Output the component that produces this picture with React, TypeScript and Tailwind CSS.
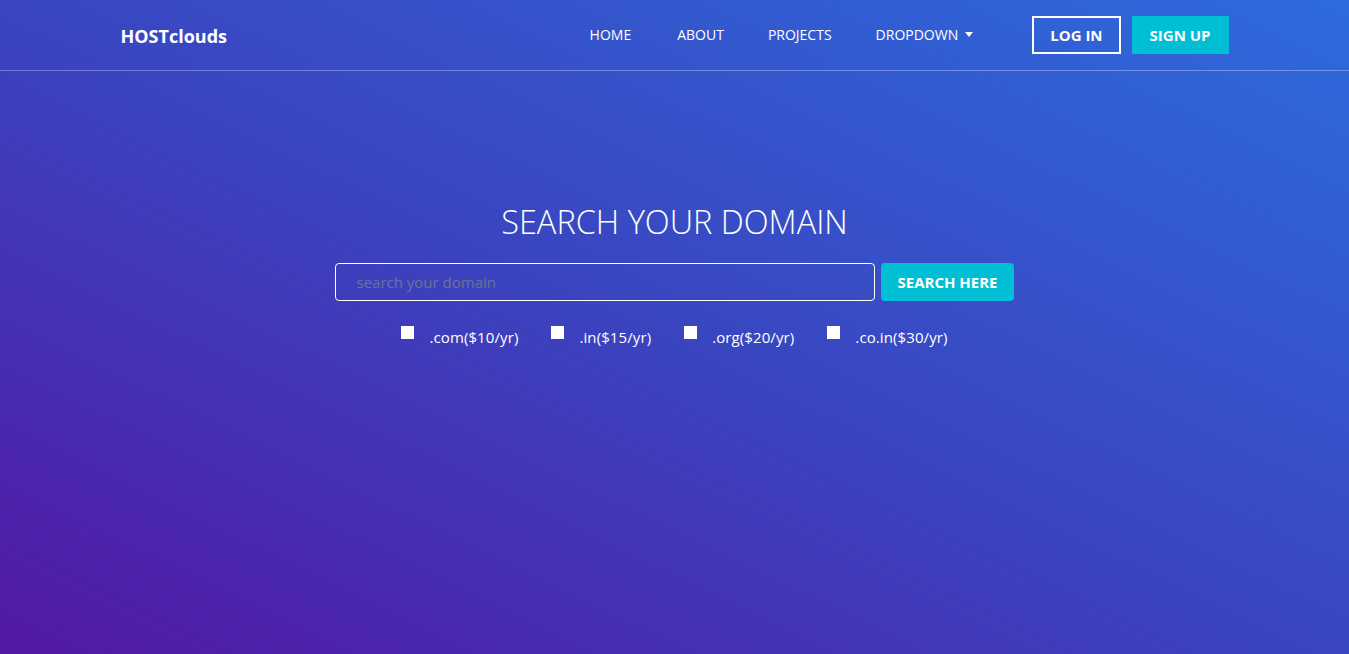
export default function App() {
  const domains = [
    ".com($10/yr)",
    ".in($15/yr)",
    ".org($20/yr)",
    ".co.in($30/yr)",
  ];

  return (
    <div
      className="min-h-screen h-[654px] text-white bg-[linear-gradient(to_top_right,#5218a3,#3a45c0_50%,#2d6bdd)]"
      style={{ fontFamily: '"Open Sans", "Noto Sans", sans-serif' }}
    >
      {/* NAVBAR */}
      <div className="border-b border-white/30">
        <div className="max-w-[1140px] mx-auto px-[15px] h-[70px] flex items-center">
          <div className="text-[18px] font-bold ml-[1px] mt-[2px]">
            HOSTclouds
          </div>

          <div className="flex items-center ml-auto mr-[59px] text-[14px] -mt-[2px]">
            <a className="pl-[21px] pr-[22px]">HOME</a>
            <a className="pl-[24px] pr-[21px]">ABOUT</a>
            <a className="pl-[23px] pr-[21px]">PROJECTS</a>
            <a className="pl-[23px] flex items-center">
              DROPDOWN
              <span className="ml-[7px] border-t-[5px] border-t-white border-x-[4px] border-x-transparent"></span>
            </a>
          </div>

          <div className="flex items-center gap-[11px]">
            <button className="h-[38px] px-[16px] border-2 border-white font-bold text-[15px]">
              LOG IN
            </button>
            <button className="h-[38px] px-[18px] bg-[#00bed3] font-bold text-[15px] mr-[1px]">
              SIGN UP
            </button>
          </div>
        </div>
      </div>

      {/* SEARCH */}
      <div className="flex flex-col items-center pt-[131px]">
        <h1 className="text-[32.5px] font-light leading-[40px]">
          SEARCH YOUR DOMAIN
        </h1>

        <div className="flex gap-[6px] mt-[21px]">
          <input
            placeholder="search your domain"
            className="w-[540px] h-[38px] rounded-[4px] border border-white bg-transparent pl-[20px] text-[15px] outline-none placeholder:text-[#6b7491]"
          />
          <button className="h-[38px] px-[16px] rounded-[4px] bg-[#00bed3] font-bold text-[15px]">
            SEARCH HERE
          </button>
        </div>

        <div className="flex gap-[33px] mt-[24px] text-[15px] tracking-[0.1px]">
          {domains.map((d) => (
            <label key={d} className="flex items-start">
              <span className="w-[13px] h-[13px] bg-white mt-[1px] mr-[15px]"></span>
              <span className="mt-[1px]">{d}</span>
            </label>
          ))}
        </div>
      </div>
    </div>
  );
}
